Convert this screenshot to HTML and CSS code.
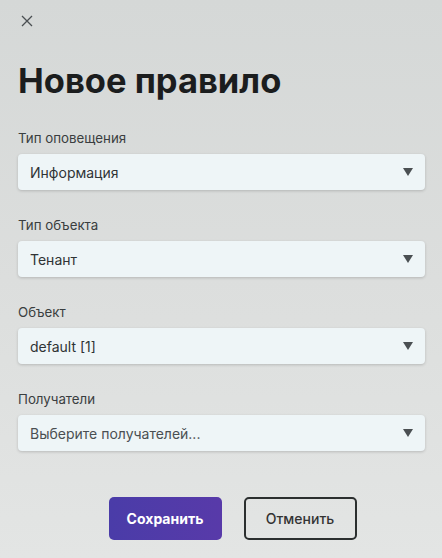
FILE: index.html
```html
<!DOCTYPE html>
<html lang="ru">
<head>
    <meta charset="UTF-8">
    <meta name="viewport" content="width=device-width, initial-scale=1.0">
    <title>Новое правило</title>
    <link rel="stylesheet" href="styles.css">
</head>
<body>
    <div class="modal">
        <button class="close" type="button" aria-label="Закрыть">
            <svg width="12" height="12" viewBox="0 0 12 12">
                <path d="M1 1L11 11M11 1L1 11" stroke="#4a4f52" stroke-width="1.3" fill="none"/>
            </svg>
        </button>
        <h1>Новое правило</h1>
        <form id="rule-form">
            <div class="form-group">
                <label>Тип оповещения</label>
                <div class="select">
                    <span>Информация</span>
                    <svg class="arrow" width="10" height="8" viewBox="0 0 10 8"><path d="M0 0H10L5 8Z" fill="#4a4f52"/></svg>
                </div>
            </div>
            <div class="form-group">
                <label>Тип объекта</label>
                <div class="select">
                    <span>Тенант</span>
                    <svg class="arrow" width="10" height="8" viewBox="0 0 10 8"><path d="M0 0H10L5 8Z" fill="#4a4f52"/></svg>
                </div>
            </div>
            <div class="form-group">
                <label>Объект</label>
                <div class="select">
                    <span>default [1]</span>
                    <svg class="arrow" width="10" height="8" viewBox="0 0 10 8"><path d="M0 0H10L5 8Z" fill="#4a4f52"/></svg>
                </div>
            </div>
            <div class="form-group">
                <label>Получатели</label>
                <div class="select">
                    <span class="placeholder">Выберите получателей...</span>
                    <svg class="arrow" width="10" height="8" viewBox="0 0 10 8"><path d="M0 0H10L5 8Z" fill="#4a4f52"/></svg>
                </div>
            </div>
            <div class="actions">
                <button type="button" class="btn btn-primary">Сохранить</button>
                <button type="button" class="btn btn-outline">Отменить</button>
            </div>
        </form>
    </div>
</body>
</html>
```

FILE: styles.css
```css
body {
    margin: 0;
    font-family: Inter, "Noto Sans", sans-serif;
    color: #2b2f31;
    background: linear-gradient(180deg, #d5d8d7 0%, #dcdedd 50%, #e3e5e4 100%);
    min-height: 558px;
}
.modal {
    padding: 15px 17px 0 18px;
}
.close {
    display: block;
    width: 12px;
    height: 12px;
    padding: 0;
    margin-left: 3px;
    border: none;
    background: none;
    cursor: pointer;
}
.close svg {
    display: block;
}
h1 {
    margin: 34px 0 29px;
    font-size: 34.5px;
    line-height: 40px;
    font-weight: 700;
    color: #1b1d1e;
}
.form-group {
    margin-bottom: 27px;
}
.form-group label {
    display: block;
    font-size: 13.3px;
    line-height: 16px;
    color: #3a3e40;
    margin-bottom: 8px;
}
.select {
    display: flex;
    align-items: center;
    justify-content: space-between;
    height: 36px;
    padding: 0 12px;
    background: #eef5f7;
    border-radius: 4px;
    box-shadow: 0 1px 3px rgba(0, 0, 0, 0.18);
    font-size: 14px;
    color: #2f3335;
}
.select .placeholder {
    color: #4a4f52;
}
.actions {
    display: flex;
    justify-content: center;
    gap: 22px;
    padding-left: 22px;
    margin-top: 46px;
}
.btn {
    width: 113px;
    height: 43px;
    border-radius: 5px;
    font-family: inherit;
    font-size: 14px;
    cursor: pointer;
}
.btn-primary {
    border: none;
    color: #fff;
    font-weight: 700;
    background: linear-gradient(90deg, #4a3ca8, #583aa9);
}
.btn-outline {
    border: 2px solid #2b2f2f;
    background: transparent;
    color: #333;
    font-weight: 500;
}
```
